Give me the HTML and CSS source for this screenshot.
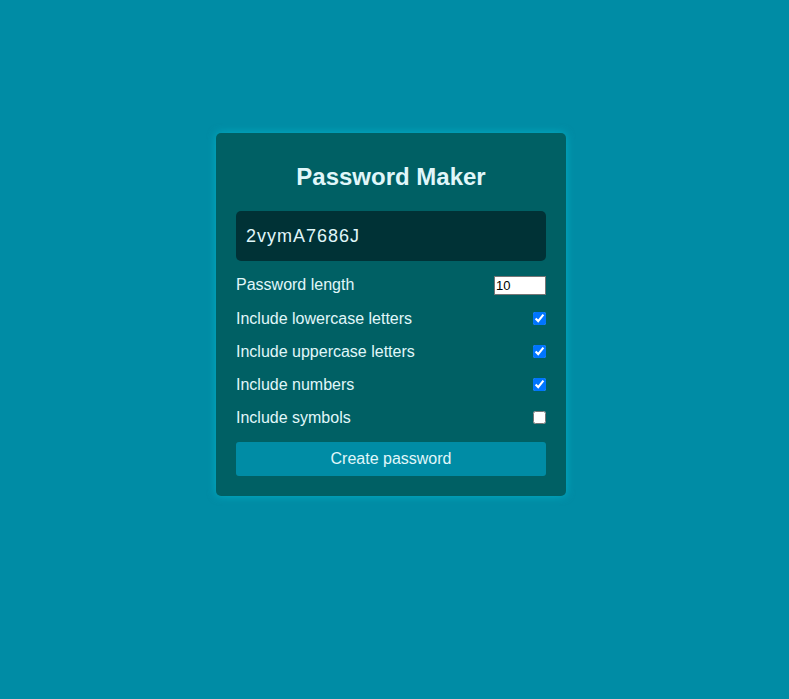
FILE: index.html
```html
<!DOCTYPE html>
<html>
<head>
<meta charset="utf-8">
<link rel="stylesheet" href="styles.css">
</head>
<body>
<div class="card">
  <h2 class="title">Password Maker</h2>
  <div class="result">2vymA7686J</div>
  <div class="settings">
    <div class="row"><label>Password length</label><input class="len" type="number" value="10"></div>
    <div class="row check"><label>Include lowercase letters</label><input type="checkbox" checked></div>
    <div class="row check"><label>Include uppercase letters</label><input type="checkbox" checked></div>
    <div class="row check"><label>Include numbers</label><input type="checkbox" checked></div>
    <div class="row check"><label>Include symbols</label><input type="checkbox"></div>
  </div>
  <button class="btn">Create password</button>
</div>
</body>
</html>
```
FILE: styles.css
```css
html, body { margin: 0; padding: 0; }
body {
  background: #008ca5;
  font-family: "Liberation Sans", Arial, sans-serif;
  color: #e0f7fa;
  height: 699px;
  display: flex;
  justify-content: center;
  align-items: flex-start;
}
.card {
  margin-top: 133px;
  margin-right: 7px;
  width: 350px;
  box-sizing: border-box;
  background: #006064;
  border-radius: 5px;
  padding: 20px;
  box-shadow: 0 0 8px rgba(0, 200, 220, 0.55);
  display: flex;
  flex-direction: column;
}
.title {
  margin: 10px 0 20px;
  font-size: 24px;
  line-height: 28px;
  text-align: center;
  font-weight: bold;
}
.result {
  height: 50px;
  background: #003236;
  border-radius: 5px;
  padding: 0 10px;
  display: flex;
  align-items: center;
  font-family: "Liberation Sans", Arial, sans-serif;
  font-size: 18px;
  letter-spacing: 1px;
  margin-bottom: 14px;
}
.settings {
  display: flex;
  flex-direction: column;
  gap: 13px;
}
.row {
  height: 20px;
  display: flex;
  justify-content: space-between;
  align-items: center;
  font-size: 16px;
}
.check label { padding-top: 2px; }
.row input[type=checkbox] { margin: 0; width: 13px; height: 13px; }
.len {
  width: 52px;
  height: 19px;
  box-sizing: border-box;
  margin: 0;
  padding: 0 1px;
  font-size: 13px;
  font-family: "Liberation Sans", Arial, sans-serif;
  border: 1px solid #767676;
}
.btn {
  margin-top: 15px;
  height: 34px;
  border: none;
  border-radius: 3px;
  background: #008ca5;
  color: #e0f7fa;
  font-family: "Liberation Sans", Arial, sans-serif;
  font-size: 16px;
}
```
